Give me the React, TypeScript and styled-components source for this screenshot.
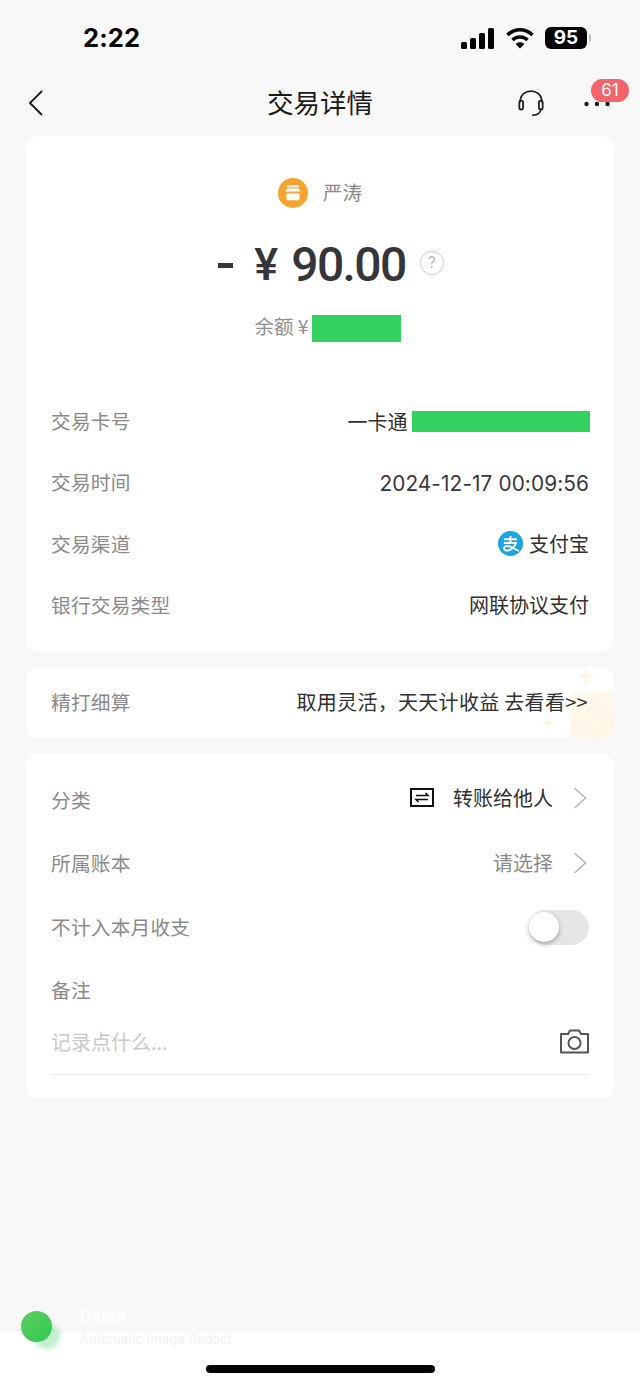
import React from "react";
import styled, { createGlobalStyle } from "styled-components";

const CJK = `"Noto Sans CJK SC", "Noto Sans", sans-serif`;
const LATIN = `"Inter", "Liberation Sans", sans-serif`;

const Global = createGlobalStyle`
  html, body { margin: 0; padding: 0; background: #f8f8f8; }
  body { font-family: ${CJK}; }
  * { box-sizing: border-box; }
`;

const Page = styled.div`
  position: relative;
  width: 640px;
  height: 1385px;
  overflow: hidden;
  background: #f8f8f8;
  display: flex;
  flex-direction: column;
`;

const StatusBar = styled.div`
  height: 74px;
  padding: 2px 53px 0 83px;
  display: flex;
  align-items: center;
  justify-content: space-between;
  flex: none;
`;

const Clock = styled.div`
  font-family: ${LATIN};
  font-weight: 700;
  font-size: 25.5px;
  line-height: 30px;
  color: #0a0a0a;
  letter-spacing: 0.1px;
`;

const StatusIcons = styled.div`
  display: flex;
  align-items: center;
  gap: 11.5px;
`;

const Battery = styled.div`
  position: relative;
  width: 42px;
  height: 22px;
  border-radius: 6px;
  background: #050505;
  color: #fff;
  font-family: ${LATIN};
  font-weight: 700;
  font-size: 19px;
  line-height: 22px;
  text-align: center;
  &::after {
    content: "";
    position: absolute;
    right: -4px;
    top: 7px;
    width: 2px;
    height: 8px;
    border-radius: 0 2px 2px 0;
    background: #bdbdbd;
  }
`;

const NavBar = styled.div`
  position: relative;
  height: 62px;
  flex: none;
  padding: 0 30px 5px 28px;
  display: flex;
  align-items: center;
  justify-content: space-between;
`;

const NavTitle = styled.div`
  position: absolute;
  left: 0;
  right: 0;
  top: 10px;
  font-size: 26.5px;
  line-height: 36px;
  color: #1b1b1b;
  font-weight: 400;
  text-align: center;
`;

const NavActions = styled.div`
  position: relative;
  display: flex;
  align-items: center;
  gap: 39px;
`;

const Badge = styled.div`
  position: absolute;
  right: -19px;
  top: -9px;
  width: 38px;
  height: 23px;
  border-radius: 12px;
  background: #f4646a;
  color: #fff;
  font-family: ${LATIN};
  font-size: 17px;
  line-height: 23px;
  text-align: center;
`;

const Main = styled.div`
  padding: 0 26px;
  display: flex;
  flex-direction: column;
`;

const Card = styled.section<{ $mt?: number }>`
  position: relative;
  background: #fff;
  border-radius: 12px;
  margin-top: ${(p) => p.$mt ?? 0}px;
  overflow: hidden;
`;

const Summary = styled.div`
  display: flex;
  flex-direction: column;
  align-items: center;
  padding-top: 40px;
  height: 255px;
`;

const Payee = styled.div`
  display: flex;
  align-items: center;
  gap: 15px;
  height: 34px;
  color: #8a8a8a;
  font-size: 19.5px;
`;

const PayeeName = styled.span`
  padding-bottom: 3px;
`;

const Amount = styled.div`
  display: flex;
  align-items: center;
  height: 60px;
  margin-top: 25px;
  margin-left: 22px;
  color: #36363a;
  font-family: "Roboto", "Liberation Sans", sans-serif;
  font-weight: 500;
  font-size: 48px;
  line-height: 60px;
  letter-spacing: -1.6px;
`;

const Minus = styled.span`
  display: block;
  width: 15px;
  height: 5px;
  background: #36363a;
  margin-right: 21px;
`;

const Yen = styled.span`
  margin-right: 13px;
  font-size: 45px;
  letter-spacing: 0;
`;

const HelpMark = styled.span`
  width: 24px;
  height: 24px;
  margin-left: 14px;
  margin-top: -4px;
  border: 1.5px solid #c9c9c9;
  border-radius: 50%;
  color: #b8b8b8;
  font-size: 16px;
  line-height: 21px;
  letter-spacing: 0;
  text-align: center;
  font-weight: 400;
`;

const Balance = styled.div`
  display: flex;
  align-items: center;
  gap: 3px;
  margin-top: 19px;
  margin-left: 15px;
  height: 28px;
  font-size: 19.5px;
  color: #8e8e8e;
`;

const BalanceText = styled.span`
  padding-bottom: 6px;
`;

const Redact = styled.span<{ $w: number; $h: number; $mr?: number }>`
  display: block;
  flex: none;
  width: ${(p) => p.$w}px;
  height: ${(p) => p.$h}px;
  margin-right: ${(p) => p.$mr ?? 0}px;
  background: #33d15f;
`;

const Rows = styled.div<{ $pt?: number; $pb?: number }>`
  position: relative;
  display: flex;
  flex-direction: column;
  padding: ${(p) => p.$pt ?? 0}px 25px ${(p) => p.$pb ?? 0}px;
`;

const Row = styled.div<{ $h?: number }>`
  height: ${(p) => p.$h ?? 61.3}px;
  display: flex;
  align-items: center;
  justify-content: space-between;
`;

const Label = styled.div`
  font-size: 19.7px;
  color: #8a8a8a;
  letter-spacing: 0.2px;
  padding-bottom: 2px;
`;

const Value = styled.div<{ $muted?: boolean; $pb?: number }>`
  display: flex;
  align-items: center;
  font-size: 20px;
  padding-bottom: ${(p) => p.$pb ?? 2}px;
  color: ${(p) => (p.$muted ? "#8a8a8a" : "#303030")};
`;

const Latin = styled.span`
  font-family: ${LATIN};
  font-size: 20.8px;
  color: #38383a;
  letter-spacing: 0.1px;
  padding-top: 1px;
`;

const Promo = styled(Value)`
  letter-spacing: 0.3px;
  margin-right: 1px;
`;

const PromoGlow = styled.div`
  position: absolute;
  right: 0;
  bottom: 0;
  width: 44px;
  height: 46px;
  background: linear-gradient(135deg, #fff9ee, #fff5e4);
  border-radius: 8px 0 0 0;
`;

const Sparkle = styled.svg<{ $x: number; $y: number }>`
  position: absolute;
  left: ${(p) => p.$x}px;
  top: ${(p) => p.$y}px;
`;

const Toggle = styled.div`
  position: relative;
  width: 60px;
  height: 35px;
  border-radius: 18px;
  background: #e6e6e6;
  &::after {
    content: "";
    position: absolute;
    left: 0;
    top: 2px;
    width: 30px;
    height: 30px;
    border-radius: 50%;
    background: #fff;
    box-shadow: 0 2px 5px rgba(0, 0, 0, 0.3);
  }
`;

const NoteInput = styled.div`
  margin: 0 25px 23px;
  height: 53px;
  display: flex;
  align-items: center;
  justify-content: space-between;
  border-bottom: 1px solid #e8e8e8;
  padding-bottom: 13px;
  color: #c9c9c9;
  font-size: 20px;
`;

const Watermark = styled.div`
  position: absolute;
  z-index: 1;
  left: 21px;
  top: 1308px;
  display: flex;
  gap: 28px;
`;

const Dot = styled.div`
  position: relative;
  width: 31px;
  height: 31px;
  margin-top: 3px;
  border-radius: 50%;
  background: linear-gradient(135deg, #5fcf62, #2fc850);
  &::before {
    content: "";
    position: absolute;
    left: 13px;
    top: 12px;
    width: 26px;
    height: 26px;
    border-radius: 50%;
    background: rgba(120, 220, 150, 0.45);
    filter: blur(2px);
    z-index: -1;
  }
`;

const WmText = styled.div`
  display: flex;
  flex-direction: column;
  font-family: ${LATIN};
  color: #fff;
`;

const WmTitle = styled.div`
  font-size: 15.5px;
  font-weight: 700;
  line-height: 20px;
`;

const WmSub = styled.div`
  font-size: 13.2px;
  line-height: 22px;
  color: #f2f2f2;
`;

const BottomBar = styled.div`
  position: absolute;
  left: 0;
  right: 0;
  bottom: 0;
  height: 52px;
  background: #fff;
  display: flex;
  justify-content: center;
  padding-top: 32px;
`;

const Home = styled.div`
  width: 229px;
  height: 8px;
  border-radius: 4px;
  background: #050505;
`;

const DotsSvg = styled.svg`
  margin-top: 3px;
`;
const AlipaySvg = styled.svg`
  margin-right: 6px;
`;
const TransferSvg = styled.svg`
  margin-right: 19px;
`;
const ChevronSvg = styled.svg`
  margin: 0 2px 0 20px;
`;

const Signal = () => (
  <svg width="33" height="21" viewBox="0 0 33 21">
    <rect x="0" y="14" width="6" height="7" rx="1.5" fill="#050505" />
    <rect x="9" y="10" width="6" height="11" rx="1.5" fill="#050505" />
    <rect x="18" y="5" width="6" height="16" rx="1.5" fill="#050505" />
    <rect x="27" y="0" width="6" height="21" rx="1.5" fill="#050505" />
  </svg>
);

const Wifi = () => (
  <svg width="28" height="22" viewBox="0 0 28 22" fill="none" stroke="#050505" strokeWidth="3.6">
    <path d="M1.5 8 C8.5 1 19.5 1 26.5 8" />
    <path d="M6.5 13 C10.5 9 17.5 9 21.5 13" />
    <path d="M14 21.5 L9.6 17 C12 14.6 16 14.6 18.4 17 Z" fill="#050505" stroke="none" />
  </svg>
);

const Back = () => (
  <svg width="16" height="26" viewBox="0 0 16 26" fill="none" stroke="#1b1b1b" strokeWidth="1.8">
    <path d="M14 1 L2 13 L14 25" />
  </svg>
);

const Headset = () => (
  <svg width="28" height="29" viewBox="0 0 30 30" fill="none" stroke="#1f1f1f" strokeWidth="1.9" strokeLinecap="round">
    <path d="M3.5 14 C3.5 -1 26.5 -1 26.5 14" />
    <rect x="2.5" y="13" width="4" height="9.5" rx="2" />
    <rect x="23.5" y="13" width="4" height="9.5" rx="2" />
    <path d="M25.5 22.5 C25 26.5 22 28.5 17 28.5" />
  </svg>
);

const Dots = () => (
  <DotsSvg width="26" height="6" viewBox="0 0 26 6" fill="#1a1a1a">
    <circle cx="2.5" cy="3" r="2.2" />
    <circle cx="13" cy="3" r="2.2" />
    <circle cx="23.5" cy="3" r="2.2" />
  </DotsSvg>
);

const Shop = () => (
  <svg width="30" height="30" viewBox="0 0 30 30">
    <circle cx="15" cy="15" r="15" fill="#f6a431" />
    <rect x="9" y="7.5" width="12" height="1.8" fill="#fff" />
    <path d="M9 10.5 H21 L22.5 13.5 H7.5 Z" fill="#fff" />
    <path d="M8.5 15.5 H21.5 V20.5 C21.5 21.5 20.8 22.3 19.8 22.3 H10.2 C9.2 22.3 8.5 21.5 8.5 20.5 Z" fill="#fff" />
  </svg>
);

const Alipay = () => (
  <AlipaySvg width="25" height="25" viewBox="0 0 25 25">
    <circle cx="12.5" cy="12.5" r="12.5" fill="#1ba4e3" />
    <path
      d="M6 8.3 H19 M12.5 5 V12 M5.8 12 H18 C16.5 17 11 20.5 7.5 19.3 C4.8 18.2 6.2 14.8 9.5 15 C12.5 15.2 16 17.5 21 20"
      fill="none"
      stroke="#fff"
      strokeWidth="1.9"
    />
  </AlipaySvg>
);

const Transfer = () => (
  <TransferSvg width="24" height="19" viewBox="0 0 24 19" fill="none" stroke="#111" strokeWidth="2">
    <rect x="1" y="1" width="22" height="17" />
    <path d="M6 7.5 H18 L15.5 5 M18 11.5 H6 L8.5 14" strokeWidth="1.6" />
  </TransferSvg>
);

const Chevron = () => (
  <ChevronSvg width="14" height="22" viewBox="0 0 14 22" fill="none" stroke="#b5b5b5" strokeWidth="1.5">
    <path d="M1.5 1 L12.5 11 L1.5 21" />
  </ChevronSvg>
);

const Camera = () => (
  <svg width="29" height="25" viewBox="0 0 29 25" fill="none" stroke="#555" strokeWidth="2">
    <path d="M1 5 H8 L10 1.5 H19 L21 5 H28 V23.5 H1 Z" strokeLinejoin="round" />
    <circle cx="14.5" cy="14" r="6" />
  </svg>
);

const Star = ({ x, y, size }: { x: number; y: number; size: number }) => (
  <Sparkle $x={x} $y={y} width={size} height={size} viewBox="0 0 20 20" fill="#fff3dc">
    <path d="M10 0 L12 8 L20 10 L12 12 L10 20 L8 12 L0 10 L8 8 Z" />
  </Sparkle>
);

export default function App() {
  return (
    <>
      <Global />
      <Page>
        <StatusBar>
          <Clock>2:22</Clock>
          <StatusIcons>
            <Signal />
            <Wifi />
            <Battery>95</Battery>
          </StatusIcons>
        </StatusBar>
        <NavBar>
          <NavTitle>交易详情</NavTitle>
          <Back />
          <NavActions>
            <Headset />
            <Dots />
            <Badge>61</Badge>
          </NavActions>
        </NavBar>
        <Main>
          <Card>
            <Summary>
              <Payee>
                <Shop />
                <PayeeName>严涛</PayeeName>
              </Payee>
              <Amount>
                <Minus />
                <Yen>¥</Yen>
                90.00
                <HelpMark>?</HelpMark>
              </Amount>
              <Balance>
                <BalanceText>余额 ¥</BalanceText>
                <Redact $w={89} $h={27} />
              </Balance>
            </Summary>
            <Rows $pb={16}>
              <Row>
                <Label>交易卡号</Label>
                <Value $pb={0}>
                  一卡通&nbsp;
                  <Redact $w={178} $h={21} $mr={-1} />
                </Value>
              </Row>
              <Row>
                <Label>交易时间</Label>
                <Latin>2024-12-17 00:09:56</Latin>
              </Row>
              <Row>
                <Label>交易渠道</Label>
                <Value $pb={1}>
                  <Alipay />
                  支付宝
                </Value>
              </Row>
              <Row>
                <Label>银行交易类型</Label>
                <Value>网联协议支付</Value>
              </Row>
            </Rows>
          </Card>
          <Card $mt={15}>
            <PromoGlow />
            <Star x={551} y={0} size={18} />
            <Star x={515} y={49} size={14} />
            <Rows>
              <Row $h={71}>
                <Label>精打细算</Label>
                <Promo>取用灵活，天天计收益 去看看&gt;&gt;</Promo>
              </Row>
            </Rows>
          </Card>
          <Card $mt={16}>
            <Rows $pt={15}>
              <Row $h={63}>
                <Label>分类</Label>
                <Value $pb={6}>
                  <Transfer />
                  转账给他人
                  <Chevron />
                </Value>
              </Row>
              <Row $h={63}>
                <Label>所属账本</Label>
                <Value $muted>
                  请选择
                  <Chevron />
                </Value>
              </Row>
              <Row $h={64}>
                <Label>不计入本月收支</Label>
                <Toggle />
              </Row>
              <Row $h={63}>
                <Label>备注</Label>
              </Row>
            </Rows>
            <NoteInput>
              记录点什么...
              <Camera />
            </NoteInput>
          </Card>
        </Main>
        <BottomBar>
          <Home />
        </BottomBar>
        <Watermark>
          <Dot />
          <WmText>
            <WmTitle>DAMA</WmTitle>
            <WmSub>Automatic Image Redact</WmSub>
          </WmText>
        </Watermark>
      </Page>
    </>
  );
}
